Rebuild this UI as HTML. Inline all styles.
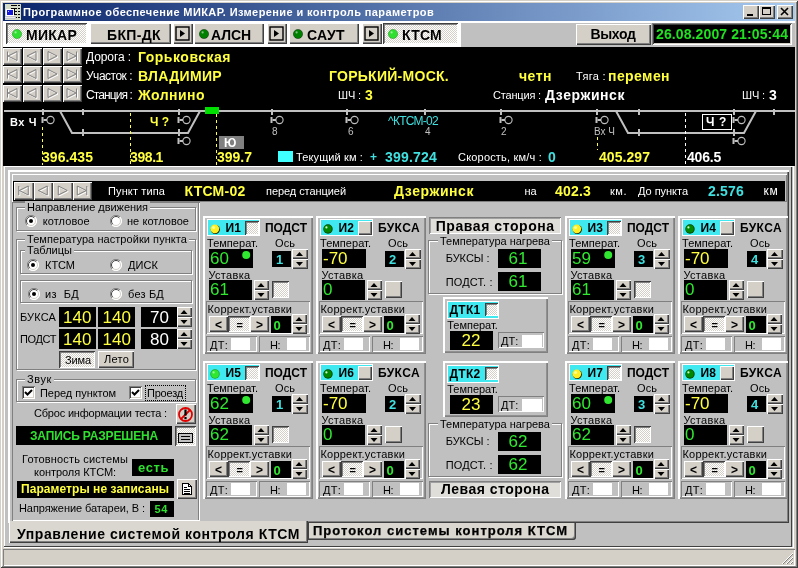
<!DOCTYPE html>
<html lang="ru"><head><meta charset="utf-8"><title>МИКАР</title><style>
html,body{margin:0;padding:0;}
body{width:798px;height:568px;overflow:hidden;background:#d4d0c8;position:relative;font-family:"Liberation Sans",sans-serif;font-size:11px;}
div,span.t,svg{position:absolute;box-sizing:border-box;}
#w{left:0;top:0;width:798px;height:568px;will-change:transform;transform:translateZ(0);}
.t{white-space:pre;}
.b{font-weight:bold;}
.r{background:#d4d0c8;box-shadow:inset 1px 1px #fff,inset -1px -1px #404040,inset -2px -2px #808080;}
.rg{background:#c0c0c0;box-shadow:inset 1px 1px #fff,inset -1px -1px #404040,inset -2px -2px #808080;}
.r1{box-shadow:inset 1px 1px #fff,inset -1px -1px #808080;}
.s{box-shadow:inset 1px 1px #808080,inset -1px -1px #fff,inset 2px 2px #404040,inset -2px -2px #d4d0c8;}
.s1{box-shadow:inset 1px 1px #808080,inset -1px -1px #fff;}
.g{border:1px solid #808080;box-shadow:1px 1px #fff,inset 1px 1px #fff;}
.k{background:#000;}
.h{background-image:repeating-conic-gradient(#fff 0 25%,#d4d0c8 0 50%);background-size:2px 2px;}
</style></head><body><div id="w">
<div class="" style="left:0px;top:0px;width:798px;height:568px;background:#d4d0c8;box-shadow:inset 1px 1px #d4d0c8,inset -1px -1px #404040,inset 2px 2px #fff,inset -2px -2px #808080;"></div>
<div class="" style="left:3px;top:3px;width:792px;height:18px;background:linear-gradient(90deg,#0a246a 0%,#a6caf0 100%);"></div>
<svg style="left:5px;top:4px" width="16" height="16" viewBox="0 0 16 16" shape-rendering="crispEdges"><rect width="16" height="16" fill="#d4dcc8"/><rect x="1" y="5" width="8" height="7" fill="#fff"/><rect x="2" y="6" width="6" height="5" fill="#1818d8"/><rect x="3" y="7" width="1" height="1" fill="#c0c0ff"/><rect x="0" y="12" width="11" height="3" fill="#c4c4cc"/><rect x="0" y="13" width="10" height="1" fill="#e8e8e8"/><path d="M6 1.5h6M13 1.5h2M6 4.5h6M13 4.5h2M10 7.5h2M13 7.5h2M10 10.5h2M13 10.5h2M11 13.5h1M13 13.5h2" stroke="#000"/><path d="M9.5 4v7" stroke="#000"/></svg>
<span class="t b" style="left:23px;top:5.0px;font-size:11px;line-height:15px;color:#fff;letter-spacing:0.40px;">Программное обеспечение МИКАР. Измерение и контроль параметров</span>
<div class="r" style="left:743px;top:5px;width:16px;height:14px;"></div>
<div class="r" style="left:759px;top:5px;width:16px;height:14px;"></div>
<div class="r" style="left:777px;top:5px;width:16px;height:14px;"></div>
<svg style="left:743px;top:5px" width="50" height="14" viewBox="0 0 50 14"><rect x="4" y="9" width="6" height="2" fill="#000"/><rect x="19.5" y="2.5" width="8" height="7" fill="none" stroke="#000"/><rect x="19" y="2" width="9" height="2" fill="#000"/><path d="M38 3l7 7M45 3l-7 7" stroke="#000" stroke-width="1.6"/></svg>
<div class="" style="left:3px;top:21px;width:792px;height:25.5px;background:#fff;"></div>
<div class="" style="left:461px;top:22.5px;width:334px;height:24.5px;background:#c0c0c0;"></div>
<div class="h" style="left:6px;top:23px;width:81px;height:21px;box-shadow:inset 1px 1px #404040,inset -1px -1px #fff,inset 2px 2px #808080;"></div>
<svg style="left:11px;top:28px" width="12" height="12" viewBox="0 0 12 12"><circle cx="6" cy="6" r="4.6" fill="#30e030" stroke="#208020" stroke-opacity=".6" stroke-width=".8"/><circle cx="4.6" cy="4.4" r="1.1" fill="#fff" fill-opacity=".5"/></svg>
<span class="t b" style="left:26px;top:25.5px;font-size:14px;line-height:18px;color:#000;letter-spacing:0.26px;">МИКАР</span>
<div class="r" style="left:90px;top:23px;width:81px;height:21px;"></div>
<span class="t b" style="left:107px;top:25.5px;font-size:14px;line-height:18px;color:#000;letter-spacing:0.36px;">БКП-ДК</span>
<div class="r" style="left:173px;top:23px;width:20px;height:21px;"></div>
<svg style="left:173px;top:23px" width="20" height="21" viewBox="0 0 20 21"><rect x="3" y="4" width="13" height="13" fill="#d4d0c8" stroke="#000" stroke-width="1.4"/><path d="M7 7l5 3.5-5 3.5z" fill="#000"/></svg>
<div class="r" style="left:194px;top:23px;width:70px;height:21px;"></div>
<svg style="left:197.5px;top:28px" width="12" height="12" viewBox="0 0 12 12"><circle cx="6" cy="6" r="4.6" fill="#008000" stroke="#002000" stroke-opacity=".6" stroke-width=".8"/><circle cx="4.6" cy="4.4" r="1.1" fill="#fff" fill-opacity=".5"/></svg>
<span class="t b" style="left:211px;top:25.5px;font-size:14px;line-height:18px;color:#000;letter-spacing:-0.08px;">АЛСН</span>
<div class="r" style="left:267px;top:23px;width:20px;height:21px;"></div>
<svg style="left:267px;top:23px" width="20" height="21" viewBox="0 0 20 21"><rect x="3" y="4" width="13" height="13" fill="#d4d0c8" stroke="#000" stroke-width="1.4"/><path d="M7 7l5 3.5-5 3.5z" fill="#000"/></svg>
<div class="r" style="left:289px;top:23px;width:70px;height:21px;"></div>
<svg style="left:292px;top:28px" width="12" height="12" viewBox="0 0 12 12"><circle cx="6" cy="6" r="4.6" fill="#008000" stroke="#002000" stroke-opacity=".6" stroke-width=".8"/><circle cx="4.6" cy="4.4" r="1.1" fill="#fff" fill-opacity=".5"/></svg>
<span class="t b" style="left:307px;top:25.5px;font-size:14px;line-height:18px;color:#000;letter-spacing:0.35px;">САУТ</span>
<div class="r" style="left:362px;top:23px;width:20px;height:21px;"></div>
<svg style="left:362px;top:23px" width="20" height="21" viewBox="0 0 20 21"><rect x="3" y="4" width="13" height="13" fill="#d4d0c8" stroke="#000" stroke-width="1.4"/><path d="M7 7l5 3.5-5 3.5z" fill="#000"/></svg>
<div class="h" style="left:383px;top:23px;width:75px;height:21px;box-shadow:inset 1px 1px #404040,inset -1px -1px #fff,inset 2px 2px #808080;"></div>
<svg style="left:387px;top:28px" width="12" height="12" viewBox="0 0 12 12"><circle cx="6" cy="6" r="4.6" fill="#30e030" stroke="#208020" stroke-opacity=".6" stroke-width=".8"/><circle cx="4.6" cy="4.4" r="1.1" fill="#fff" fill-opacity=".5"/></svg>
<span class="t b" style="left:402px;top:25.5px;font-size:14px;line-height:18px;color:#000;letter-spacing:0.24px;">КТСМ</span>
<div class="r" style="left:576px;top:23.5px;width:75px;height:21px;"></div>
<span class="t b" style="left:590.5px;top:25.0px;font-size:14px;line-height:18px;color:#000;letter-spacing:-0.35px;">Выход</span>
<div class="k s" style="left:652px;top:23px;width:140px;height:22px;"></div>
<span class="t b" style="left:656px;top:25.0px;font-size:14px;line-height:18px;color:#20e020;letter-spacing:0.11px;">26.08.2007 21:05:44</span>
<div class="k" style="left:3px;top:46.5px;width:792px;height:119.5px;"></div>
<div class="" style="left:3px;top:48px;width:19px;height:17px;background:#d4d0c8;box-shadow:inset 1px 1px #fff,inset -1px -1px #404040,inset -2px -2px #808080;"></div>
<svg style="left:3px;top:48px" width="19" height="17"><path d="M4.5 3.5v9M14.0 3.5l-9 4.5 9 4.5z" transform="translate(1,1)" fill="none" stroke="#fff"/><path d="M4.5 3.5v9M14.0 3.5l-9 4.5 9 4.5z" fill="none" stroke="#808080"/></svg>
<div class="" style="left:23px;top:48px;width:19px;height:17px;background:#d4d0c8;box-shadow:inset 1px 1px #fff,inset -1px -1px #404040,inset -2px -2px #808080;"></div>
<svg style="left:23px;top:48px" width="19" height="17"><path d="M13.0 3.5l-9 4.5 9 4.5z" transform="translate(1,1)" fill="none" stroke="#fff"/><path d="M13.0 3.5l-9 4.5 9 4.5z" fill="none" stroke="#808080"/></svg>
<div class="" style="left:43px;top:48px;width:19px;height:17px;background:#d4d0c8;box-shadow:inset 1px 1px #fff,inset -1px -1px #404040,inset -2px -2px #808080;"></div>
<svg style="left:43px;top:48px" width="19" height="17"><path d="M5.0 3.5l9 4.5-9 4.5z" transform="translate(1,1)" fill="none" stroke="#fff"/><path d="M5.0 3.5l9 4.5-9 4.5z" fill="none" stroke="#808080"/></svg>
<div class="" style="left:63px;top:48px;width:19px;height:17px;background:#d4d0c8;box-shadow:inset 1px 1px #fff,inset -1px -1px #404040,inset -2px -2px #808080;"></div>
<svg style="left:63px;top:48px" width="19" height="17"><path d="M13.5 3.5v9M4.0 3.5l9 4.5-9 4.5z" transform="translate(1,1)" fill="none" stroke="#fff"/><path d="M13.5 3.5v9M4.0 3.5l9 4.5-9 4.5z" fill="none" stroke="#808080"/></svg>
<div class="" style="left:3px;top:66px;width:19px;height:17px;background:#d4d0c8;box-shadow:inset 1px 1px #fff,inset -1px -1px #404040,inset -2px -2px #808080;"></div>
<svg style="left:3px;top:66px" width="19" height="17"><path d="M4.5 3.5v9M14.0 3.5l-9 4.5 9 4.5z" transform="translate(1,1)" fill="none" stroke="#fff"/><path d="M4.5 3.5v9M14.0 3.5l-9 4.5 9 4.5z" fill="none" stroke="#808080"/></svg>
<div class="" style="left:23px;top:66px;width:19px;height:17px;background:#d4d0c8;box-shadow:inset 1px 1px #fff,inset -1px -1px #404040,inset -2px -2px #808080;"></div>
<svg style="left:23px;top:66px" width="19" height="17"><path d="M13.0 3.5l-9 4.5 9 4.5z" transform="translate(1,1)" fill="none" stroke="#fff"/><path d="M13.0 3.5l-9 4.5 9 4.5z" fill="none" stroke="#808080"/></svg>
<div class="" style="left:43px;top:66px;width:19px;height:17px;background:#d4d0c8;box-shadow:inset 1px 1px #fff,inset -1px -1px #404040,inset -2px -2px #808080;"></div>
<svg style="left:43px;top:66px" width="19" height="17"><path d="M5.0 3.5l9 4.5-9 4.5z" transform="translate(1,1)" fill="none" stroke="#fff"/><path d="M5.0 3.5l9 4.5-9 4.5z" fill="none" stroke="#808080"/></svg>
<div class="" style="left:63px;top:66px;width:19px;height:17px;background:#d4d0c8;box-shadow:inset 1px 1px #fff,inset -1px -1px #404040,inset -2px -2px #808080;"></div>
<svg style="left:63px;top:66px" width="19" height="17"><path d="M13.5 3.5v9M4.0 3.5l9 4.5-9 4.5z" transform="translate(1,1)" fill="none" stroke="#fff"/><path d="M13.5 3.5v9M4.0 3.5l9 4.5-9 4.5z" fill="none" stroke="#808080"/></svg>
<div class="" style="left:3px;top:85px;width:19px;height:17px;background:#d4d0c8;box-shadow:inset 1px 1px #fff,inset -1px -1px #404040,inset -2px -2px #808080;"></div>
<svg style="left:3px;top:85px" width="19" height="17"><path d="M4.5 3.5v9M14.0 3.5l-9 4.5 9 4.5z" transform="translate(1,1)" fill="none" stroke="#fff"/><path d="M4.5 3.5v9M14.0 3.5l-9 4.5 9 4.5z" fill="none" stroke="#808080"/></svg>
<div class="" style="left:23px;top:85px;width:19px;height:17px;background:#d4d0c8;box-shadow:inset 1px 1px #fff,inset -1px -1px #404040,inset -2px -2px #808080;"></div>
<svg style="left:23px;top:85px" width="19" height="17"><path d="M13.0 3.5l-9 4.5 9 4.5z" transform="translate(1,1)" fill="none" stroke="#fff"/><path d="M13.0 3.5l-9 4.5 9 4.5z" fill="none" stroke="#808080"/></svg>
<div class="" style="left:43px;top:85px;width:19px;height:17px;background:#d4d0c8;box-shadow:inset 1px 1px #fff,inset -1px -1px #404040,inset -2px -2px #808080;"></div>
<svg style="left:43px;top:85px" width="19" height="17"><path d="M5.0 3.5l9 4.5-9 4.5z" transform="translate(1,1)" fill="none" stroke="#fff"/><path d="M5.0 3.5l9 4.5-9 4.5z" fill="none" stroke="#808080"/></svg>
<div class="" style="left:63px;top:85px;width:19px;height:17px;background:#d4d0c8;box-shadow:inset 1px 1px #fff,inset -1px -1px #404040,inset -2px -2px #808080;"></div>
<svg style="left:63px;top:85px" width="19" height="17"><path d="M13.5 3.5v9M4.0 3.5l9 4.5-9 4.5z" transform="translate(1,1)" fill="none" stroke="#fff"/><path d="M13.5 3.5v9M4.0 3.5l9 4.5-9 4.5z" fill="none" stroke="#808080"/></svg>
<span class="t" style="left:86px;top:49.0px;font-size:12px;line-height:16px;color:#fff;letter-spacing:-0.09px;">Дорога :</span>
<span class="t b" style="left:138px;top:48.0px;font-size:14px;line-height:18px;color:#ffff40;letter-spacing:0.51px;">Горьковская</span>
<span class="t" style="left:86px;top:67.5px;font-size:12px;line-height:16px;color:#fff;letter-spacing:-0.50px;">Участок :</span>
<span class="t b" style="left:138px;top:66.5px;font-size:14px;line-height:18px;color:#ffff40;letter-spacing:0.33px;">ВЛАДИМИР</span>
<span class="t b" style="left:329px;top:66.5px;font-size:14px;line-height:18px;color:#ffff40;letter-spacing:0.27px;">ГОРЬКИЙ-МОСК.</span>
<span class="t b" style="left:519px;top:66.5px;font-size:14px;line-height:18px;color:#ffff40;letter-spacing:0.49px;">четн</span>
<span class="t" style="left:576px;top:68.5px;font-size:11px;line-height:15px;color:#fff;letter-spacing:0.32px;">Тяга :</span>
<span class="t b" style="left:608px;top:66.5px;font-size:14px;line-height:18px;color:#ffff40;letter-spacing:0.43px;">перемен</span>
<span class="t" style="left:86px;top:86.5px;font-size:12px;line-height:16px;color:#fff;letter-spacing:-0.90px;">Станция :</span>
<span class="t b" style="left:138px;top:85.5px;font-size:14px;line-height:18px;color:#ffff40;letter-spacing:0.48px;">Жолнино</span>
<span class="t" style="left:338px;top:87.5px;font-size:11px;line-height:15px;color:#fff;letter-spacing:-0.13px;">ШЧ :</span>
<span class="t b" style="left:365px;top:85.5px;font-size:14px;line-height:18px;color:#ffff40;">3</span>
<span class="t" style="left:493px;top:87.5px;font-size:11px;line-height:15px;color:#fff;letter-spacing:-0.18px;">Станция :</span>
<span class="t b" style="left:545px;top:85.5px;font-size:14px;line-height:18px;color:#fff;letter-spacing:0.55px;">Дзержинск</span>
<span class="t" style="left:742px;top:87.5px;font-size:11px;line-height:15px;color:#fff;letter-spacing:-0.13px;">ШЧ :</span>
<span class="t b" style="left:769px;top:85.5px;font-size:14px;line-height:18px;color:#fff;">3</span>
<svg style="left:0;top:100px" width="798" height="68" viewBox="0 100 798 68" shape-rendering="crispEdges"><rect x="4" y="110" width="791" height="2" fill="#c0c0c0"/><path d="M60 111L72 133H188L200 111" fill="none" stroke="#c0c0c0" stroke-width="2" shape-rendering="auto"/><rect x="41.5" y="108.5" width="2" height="6.5" fill="#c0c0c0"/><rect x="81.5" y="108.5" width="2" height="6.5" fill="#c0c0c0"/><rect x="177.5" y="108.5" width="2" height="6.5" fill="#c0c0c0"/><rect x="270.5" y="108.5" width="2" height="6.5" fill="#c0c0c0"/><rect x="345.5" y="108.5" width="2" height="6.5" fill="#c0c0c0"/><rect x="423.5" y="108.5" width="2" height="6.5" fill="#c0c0c0"/><rect x="499.5" y="108.5" width="2" height="6.5" fill="#c0c0c0"/><rect x="595.5" y="108.5" width="2" height="6.5" fill="#c0c0c0"/><rect x="637.5" y="108.5" width="2" height="6.5" fill="#c0c0c0"/><rect x="732.5" y="108.5" width="2" height="6.5" fill="#c0c0c0"/><rect x="772.5" y="108.5" width="2" height="6.5" fill="#c0c0c0"/><rect x="81.5" y="129" width="2" height="7" fill="#c0c0c0"/><rect x="177.5" y="129" width="2" height="7" fill="#c0c0c0"/><path d="M616 111L628 133H744L756 111" fill="none" stroke="#c0c0c0" stroke-width="2" shape-rendering="auto"/><rect x="637.5" y="129" width="2" height="7" fill="#c0c0c0"/><rect x="732.5" y="129" width="2" height="7" fill="#c0c0c0"/><rect x="205" y="107" width="14" height="7" fill="#00e000"/><path d="M42.5 127V165" stroke="#ffff40" stroke-dasharray="3 3"/><path d="M130.5 113V165" stroke="#ffff40" stroke-dasharray="3 3"/><path d="M216.5 114V165" stroke="#ffff40" stroke-dasharray="3 3"/><path d="M597.5 137V150" stroke="#ffff40" stroke-dasharray="3 3"/><path d="M685.5 113V165" stroke="#fff" stroke-dasharray="3 3"/><g shape-rendering="auto"><rect x="41.5" y="117" width="2" height="6" fill="#c0c0c0"/><rect x="43.5" y="119" width="3.5" height="2" fill="#c0c0c0"/><circle cx="50.5" cy="120" r="3.6" fill="none" stroke="#c0c0c0" stroke-width="1.1"/><rect x="177.5" y="117" width="2" height="6" fill="#c0c0c0"/><rect x="179.5" y="119" width="3.5" height="2" fill="#c0c0c0"/><circle cx="186.5" cy="120" r="3.6" fill="none" stroke="#c0c0c0" stroke-width="1.1"/><rect x="177.5" y="138" width="2" height="6" fill="#c0c0c0"/><rect x="179.5" y="140" width="3.5" height="2" fill="#c0c0c0"/><circle cx="186.5" cy="141" r="3.6" fill="none" stroke="#c0c0c0" stroke-width="1.1"/><rect x="270.5" y="117" width="2" height="6" fill="#c0c0c0"/><rect x="272.5" y="119" width="3.5" height="2" fill="#c0c0c0"/><circle cx="279.5" cy="120" r="3.6" fill="none" stroke="#c0c0c0" stroke-width="1.1"/><rect x="345.5" y="117" width="2" height="6" fill="#c0c0c0"/><rect x="347.5" y="119" width="3.5" height="2" fill="#c0c0c0"/><circle cx="354.5" cy="120" r="3.6" fill="none" stroke="#c0c0c0" stroke-width="1.1"/><rect x="499.5" y="117" width="2" height="6" fill="#c0c0c0"/><rect x="501.5" y="119" width="3.5" height="2" fill="#c0c0c0"/><circle cx="508.5" cy="120" r="3.6" fill="none" stroke="#c0c0c0" stroke-width="1.1"/><rect x="595.5" y="117" width="2" height="6" fill="#c0c0c0"/><rect x="597.5" y="119" width="3.5" height="2" fill="#c0c0c0"/><circle cx="604.5" cy="120" r="3.6" fill="none" stroke="#c0c0c0" stroke-width="1.1"/><rect x="732.5" y="117" width="2" height="6" fill="#c0c0c0"/><rect x="734.5" y="119" width="3.5" height="2" fill="#c0c0c0"/><circle cx="741.5" cy="120" r="3.6" fill="none" stroke="#c0c0c0" stroke-width="1.1"/><rect x="732.5" y="138" width="2" height="6" fill="#c0c0c0"/><rect x="734.5" y="140" width="3.5" height="2" fill="#c0c0c0"/><circle cx="741.5" cy="141" r="3.6" fill="none" stroke="#c0c0c0" stroke-width="1.1"/></g><rect x="219" y="136" width="25" height="13" fill="#808080"/><rect x="702.5" y="114.5" width="29" height="15" fill="#000" stroke="#fff"/><rect x="278" y="151" width="15" height="11" fill="#40ffff"/></svg>
<span class="t b" style="left:10px;top:114.5px;font-size:11px;line-height:15px;color:#fff;letter-spacing:0.57px;">Вх Ч</span>
<span class="t b" style="left:150px;top:114.0px;font-size:12px;line-height:16px;color:#ffff40;letter-spacing:-0.04px;">Ч ?</span>
<span class="t b" style="left:706px;top:114.0px;font-size:12px;line-height:16px;color:#fff;letter-spacing:0.63px;">Ч ?</span>
<span class="t b" style="left:224px;top:134.5px;font-size:12px;line-height:16px;color:#fff;letter-spacing:0.62px;">Ю</span>
<span class="t b" style="left:42px;top:148.0px;font-size:14px;line-height:18px;color:#ffff40;letter-spacing:0.06px;">396.435</span>
<span class="t b" style="left:130px;top:148.0px;font-size:14px;line-height:18px;color:#ffff40;letter-spacing:-0.41px;">398.1</span>
<span class="t b" style="left:217px;top:148.0px;font-size:14px;line-height:18px;color:#ffff40;letter-spacing:-0.01px;">399.7</span>
<span class="t b" style="left:599px;top:148.0px;font-size:14px;line-height:18px;color:#ffff40;letter-spacing:0.06px;">405.297</span>
<span class="t b" style="left:687px;top:148.0px;font-size:14px;line-height:18px;color:#fff;letter-spacing:-0.21px;">406.5</span>
<span class="t" style="left:272px;top:125.0px;font-size:10px;line-height:14px;color:#c0c0c0;">8</span>
<span class="t" style="left:348px;top:125.0px;font-size:10px;line-height:14px;color:#c0c0c0;">6</span>
<span class="t" style="left:425px;top:125.0px;font-size:10px;line-height:14px;color:#c0c0c0;">4</span>
<span class="t" style="left:501px;top:125.0px;font-size:10px;line-height:14px;color:#c0c0c0;">2</span>
<span class="t" style="left:594px;top:125.0px;font-size:10px;line-height:14px;color:#c0c0c0;letter-spacing:-0.00px;">Вх Ч</span>
<span class="t" style="left:388px;top:113.0px;font-size:12px;line-height:16px;color:#40e0e0;letter-spacing:-0.73px;">^КТСМ-02</span>
<span class="t" style="left:296px;top:149.5px;font-size:11px;line-height:15px;color:#fff;letter-spacing:0.12px;">Текущий км :</span>
<span class="t b" style="left:370px;top:148.5px;font-size:12px;line-height:16px;color:#40e0e0;">+</span>
<span class="t b" style="left:385px;top:148.0px;font-size:14px;line-height:18px;color:#40e0e0;letter-spacing:0.20px;">399.724</span>
<span class="t" style="left:458px;top:149.5px;font-size:11px;line-height:15px;color:#fff;letter-spacing:0.19px;">Скорость, км/ч :</span>
<span class="t b" style="left:548px;top:148.0px;font-size:14px;line-height:18px;color:#40e0e0;">0</span>
<div class="" style="left:3px;top:166px;width:792px;height:400px;background:#d4d0c8;"></div>
<div class="" style="left:4px;top:166px;width:790px;height:382px;background:#c0c0c0;"></div>
<div class="" style="left:4px;top:166px;width:790px;height:1px;background:#fff;"></div>
<div class="" style="left:4px;top:166px;width:1px;height:381px;background:#fff;"></div>
<div class="" style="left:791px;top:167px;width:1px;height:380px;background:#404040;"></div>
<div class="" style="left:793px;top:166px;width:1px;height:382px;background:#fff;"></div>
<div class="" style="left:4px;top:546px;width:788px;height:1px;background:#404040;"></div>
<div class="" style="left:4px;top:547px;width:790px;height:1px;background:#fff;"></div>
<div class="" style="left:8px;top:170px;width:781px;height:353px;background:#c0c0c0;box-shadow:inset 1px 1px #fff,inset 2px 2px #fff,inset -1px -1px #404040,inset -2px -2px #808080;"></div>
<div class="" style="left:12px;top:174px;width:775px;height:28px;box-shadow:inset 1px 1px #fff,inset -1px -1px #808080;"></div>
<div class="k" style="left:13px;top:181px;width:772px;height:20px;"></div>
<div class="" style="left:14.0px;top:182px;width:19.5px;height:18px;background:#d4d0c8;box-shadow:inset 1px 1px #fff,inset -1px -1px #404040,inset -2px -2px #808080;"></div>
<svg style="left:14.0px;top:182px" width="19.5" height="18"><path d="M4.75 4.0v9M14.25 4.0l-9 4.5 9 4.5z" transform="translate(1,1)" fill="none" stroke="#fff"/><path d="M4.75 4.0v9M14.25 4.0l-9 4.5 9 4.5z" fill="none" stroke="#808080"/></svg>
<div class="" style="left:33.5px;top:182px;width:19.5px;height:18px;background:#d4d0c8;box-shadow:inset 1px 1px #fff,inset -1px -1px #404040,inset -2px -2px #808080;"></div>
<svg style="left:33.5px;top:182px" width="19.5" height="18"><path d="M13.25 4.0l-9 4.5 9 4.5z" transform="translate(1,1)" fill="none" stroke="#fff"/><path d="M13.25 4.0l-9 4.5 9 4.5z" fill="none" stroke="#808080"/></svg>
<div class="" style="left:53.0px;top:182px;width:19.5px;height:18px;background:#d4d0c8;box-shadow:inset 1px 1px #fff,inset -1px -1px #404040,inset -2px -2px #808080;"></div>
<svg style="left:53.0px;top:182px" width="19.5" height="18"><path d="M5.25 4.0l9 4.5-9 4.5z" transform="translate(1,1)" fill="none" stroke="#fff"/><path d="M5.25 4.0l9 4.5-9 4.5z" fill="none" stroke="#808080"/></svg>
<div class="" style="left:72.5px;top:182px;width:19.5px;height:18px;background:#d4d0c8;box-shadow:inset 1px 1px #fff,inset -1px -1px #404040,inset -2px -2px #808080;"></div>
<svg style="left:72.5px;top:182px" width="19.5" height="18"><path d="M13.75 4.0v9M4.25 4.0l9 4.5-9 4.5z" transform="translate(1,1)" fill="none" stroke="#fff"/><path d="M13.75 4.0v9M4.25 4.0l9 4.5-9 4.5z" fill="none" stroke="#808080"/></svg>
<span class="t" style="left:108px;top:183.5px;font-size:11px;line-height:15px;color:#fff;letter-spacing:0.12px;">Пункт типа</span>
<span class="t b" style="left:184.5px;top:182.0px;font-size:14px;line-height:18px;color:#ffff40;letter-spacing:0.25px;">КТСМ-02</span>
<span class="t" style="left:266px;top:183.5px;font-size:11px;line-height:15px;color:#fff;letter-spacing:-0.06px;">перед станцией</span>
<span class="t b" style="left:394px;top:182.0px;font-size:14px;line-height:18px;color:#ffff40;letter-spacing:0.55px;">Дзержинск</span>
<span class="t" style="left:524.5px;top:183.5px;font-size:11px;line-height:15px;color:#fff;letter-spacing:-0.10px;">на</span>
<span class="t b" style="left:555px;top:182.0px;font-size:14px;line-height:18px;color:#ffff40;letter-spacing:0.19px;">402.3</span>
<span class="t" style="left:610px;top:183.5px;font-size:11px;line-height:15px;color:#fff;letter-spacing:0.52px;">км.</span>
<span class="t" style="left:638px;top:183.5px;font-size:11px;line-height:15px;color:#fff;letter-spacing:-0.03px;">До пункта</span>
<span class="t b" style="left:708px;top:182.0px;font-size:14px;line-height:18px;color:#40e0e0;letter-spacing:0.19px;">2.576</span>
<span class="t" style="left:763.5px;top:183.0px;font-size:12px;line-height:16px;color:#fff;letter-spacing:0.75px;">км</span>
<div class="" style="left:12px;top:202px;width:188px;height:319px;background:#c0c0c0;box-shadow:inset 1px 1px #808080,inset -1px -1px #fff,inset -2px 0 #808080;"></div>
<div class="g" style="left:16px;top:207px;width:180px;height:24px;"></div>
<div class="" style="left:25px;top:201px;width:125px;height:13px;background:#c0c0c0;"></div>
<span class="t" style="left:27px;top:200.0px;font-size:11px;line-height:15px;color:#000;letter-spacing:-0.04px;">Направление движения</span>
<svg style="left:25px;top:215px" width="12" height="12" viewBox="0 0 12 12"><circle cx="6" cy="6" r="5.5" fill="#fff"/><path d="M10 2A5.5 5.5 0 0 0 2 10" fill="none" stroke="#808080"/><path d="M2 10A5.5 5.5 0 0 0 10 2" fill="none" stroke="#fff"/><path d="M9.2 2.8A4.5 4.5 0 0 0 2.8 9.2" fill="none" stroke="#404040"/><path d="M2.8 9.2A4.5 4.5 0 0 0 9.2 2.8" fill="none" stroke="#d4d0c8"/><circle cx="6" cy="6" r="2" fill="#000"/></svg>
<span class="t" style="left:42.7px;top:213.5px;font-size:11px;line-height:15px;color:#000;letter-spacing:0.10px;">котловое</span>
<svg style="left:110px;top:215px" width="12" height="12" viewBox="0 0 12 12"><circle cx="6" cy="6" r="5.5" fill="#fff"/><path d="M10 2A5.5 5.5 0 0 0 2 10" fill="none" stroke="#808080"/><path d="M2 10A5.5 5.5 0 0 0 10 2" fill="none" stroke="#fff"/><path d="M9.2 2.8A4.5 4.5 0 0 0 2.8 9.2" fill="none" stroke="#404040"/><path d="M2.8 9.2A4.5 4.5 0 0 0 9.2 2.8" fill="none" stroke="#d4d0c8"/></svg>
<span class="t" style="left:127px;top:213.5px;font-size:11px;line-height:15px;color:#000;letter-spacing:0.05px;">не котловое</span>
<div class="g" style="left:16px;top:239px;width:180px;height:131px;"></div>
<div class="" style="left:25px;top:233px;width:164px;height:13px;background:#c0c0c0;"></div>
<span class="t" style="left:27px;top:232.0px;font-size:11px;line-height:15px;color:#000;letter-spacing:0.06px;">Температура настройки пункта</span>
<div class="g" style="left:20px;top:250px;width:172px;height:24px;"></div>
<div class="" style="left:25px;top:244px;width:49px;height:13px;background:#c0c0c0;"></div>
<span class="t" style="left:27px;top:243.0px;font-size:11px;line-height:15px;color:#000;letter-spacing:0.01px;">Таблицы</span>
<svg style="left:27px;top:259px" width="12" height="12" viewBox="0 0 12 12"><circle cx="6" cy="6" r="5.5" fill="#fff"/><path d="M10 2A5.5 5.5 0 0 0 2 10" fill="none" stroke="#808080"/><path d="M2 10A5.5 5.5 0 0 0 10 2" fill="none" stroke="#fff"/><path d="M9.2 2.8A4.5 4.5 0 0 0 2.8 9.2" fill="none" stroke="#404040"/><path d="M2.8 9.2A4.5 4.5 0 0 0 9.2 2.8" fill="none" stroke="#d4d0c8"/><circle cx="6" cy="6" r="2" fill="#000"/></svg>
<span class="t" style="left:45px;top:257.5px;font-size:11px;line-height:15px;color:#000;letter-spacing:-0.03px;">КТСМ</span>
<svg style="left:110px;top:259px" width="12" height="12" viewBox="0 0 12 12"><circle cx="6" cy="6" r="5.5" fill="#fff"/><path d="M10 2A5.5 5.5 0 0 0 2 10" fill="none" stroke="#808080"/><path d="M2 10A5.5 5.5 0 0 0 10 2" fill="none" stroke="#fff"/><path d="M9.2 2.8A4.5 4.5 0 0 0 2.8 9.2" fill="none" stroke="#404040"/><path d="M2.8 9.2A4.5 4.5 0 0 0 9.2 2.8" fill="none" stroke="#d4d0c8"/></svg>
<span class="t" style="left:128px;top:257.5px;font-size:11px;line-height:15px;color:#000;letter-spacing:0.07px;">ДИСК</span>
<div class="g" style="left:20px;top:280px;width:172px;height:23px;"></div>
<svg style="left:28px;top:288px" width="12" height="12" viewBox="0 0 12 12"><circle cx="6" cy="6" r="5.5" fill="#fff"/><path d="M10 2A5.5 5.5 0 0 0 2 10" fill="none" stroke="#808080"/><path d="M2 10A5.5 5.5 0 0 0 10 2" fill="none" stroke="#fff"/><path d="M9.2 2.8A4.5 4.5 0 0 0 2.8 9.2" fill="none" stroke="#404040"/><path d="M2.8 9.2A4.5 4.5 0 0 0 9.2 2.8" fill="none" stroke="#d4d0c8"/><circle cx="6" cy="6" r="2" fill="#000"/></svg>
<span class="t" style="left:45px;top:286.5px;font-size:11px;line-height:15px;color:#000;letter-spacing:0.34px;">из  БД</span>
<svg style="left:110px;top:288px" width="12" height="12" viewBox="0 0 12 12"><circle cx="6" cy="6" r="5.5" fill="#fff"/><path d="M10 2A5.5 5.5 0 0 0 2 10" fill="none" stroke="#808080"/><path d="M2 10A5.5 5.5 0 0 0 10 2" fill="none" stroke="#fff"/><path d="M9.2 2.8A4.5 4.5 0 0 0 2.8 9.2" fill="none" stroke="#404040"/><path d="M2.8 9.2A4.5 4.5 0 0 0 9.2 2.8" fill="none" stroke="#d4d0c8"/></svg>
<span class="t" style="left:128px;top:286.5px;font-size:11px;line-height:15px;color:#000;letter-spacing:0.20px;">без БД</span>
<span class="t" style="left:20px;top:309.5px;font-size:11px;line-height:15px;color:#000;letter-spacing:0.14px;">БУКСА</span>
<span class="t" style="left:20px;top:332.0px;font-size:11px;line-height:15px;color:#000;letter-spacing:-0.39px;">ПОДСТ</span>
<div class="k" style="left:59px;top:307px;width:36.5px;height:20px;"></div>
<span class="t" style="left:63px;top:306.5px;font-size:17px;line-height:21px;color:#ffff40;">140</span>
<div class="k" style="left:98px;top:307px;width:37px;height:20px;"></div>
<span class="t" style="left:102.5px;top:306.5px;font-size:17px;line-height:21px;color:#ffff40;">140</span>
<div class="k" style="left:141px;top:307px;width:36px;height:20px;"></div>
<span class="t" style="left:150px;top:306.5px;font-size:17px;line-height:21px;color:#fff;">70</span>
<div class="r" style="left:177px;top:307px;width:15px;height:10px;"></div>
<svg style="left:177px;top:307px" width="15" height="10"><path d="M3.5 7.0l3.5-4 3.5 4z" fill="#000"/></svg>
<div class="r" style="left:177px;top:317px;width:15px;height:10px;"></div>
<svg style="left:177px;top:317px" width="15" height="10"><path d="M3.5 3.0l3.5 4 3.5-4z" fill="#000"/></svg>
<div class="k" style="left:59px;top:329px;width:36.5px;height:20px;"></div>
<span class="t" style="left:63px;top:328.5px;font-size:17px;line-height:21px;color:#ffff40;">140</span>
<div class="k" style="left:98px;top:329px;width:37px;height:20px;"></div>
<span class="t" style="left:102.5px;top:328.5px;font-size:17px;line-height:21px;color:#ffff40;">140</span>
<div class="k" style="left:141px;top:329px;width:36px;height:20px;"></div>
<span class="t" style="left:150px;top:328.5px;font-size:17px;line-height:21px;color:#fff;">80</span>
<div class="r" style="left:177px;top:329px;width:15px;height:10px;"></div>
<svg style="left:177px;top:329px" width="15" height="10"><path d="M3.5 7.0l3.5-4 3.5 4z" fill="#000"/></svg>
<div class="r" style="left:177px;top:339px;width:15px;height:10px;"></div>
<svg style="left:177px;top:339px" width="15" height="10"><path d="M3.5 3.0l3.5 4 3.5-4z" fill="#000"/></svg>
<div class="h" style="left:59px;top:351px;width:36px;height:17px;box-shadow:inset 1px 1px #404040,inset -1px -1px #fff,inset 2px 2px #808080;"></div>
<span class="t" style="left:65px;top:352.5px;font-size:11px;line-height:15px;color:#000;letter-spacing:-0.12px;">Зима</span>
<div class="r" style="left:98px;top:351px;width:36px;height:17px;"></div>
<span class="t" style="left:104px;top:352.0px;font-size:11px;line-height:15px;color:#000;letter-spacing:0.25px;">Лето</span>
<div class="g" style="left:16px;top:379px;width:180px;height:23px;"></div>
<div class="" style="left:25px;top:373px;width:29px;height:13px;background:#c0c0c0;"></div>
<span class="t" style="left:27px;top:372.0px;font-size:11px;line-height:15px;color:#000;letter-spacing:0.61px;">Звук</span>
<div class="" style="left:22px;top:386px;width:13px;height:13px;background:#fff;box-shadow:inset 1px 1px #808080,inset -1px -1px #fff,inset 2px 2px #404040,inset -2px -2px #d4d0c8;"></div>
<svg style="left:22px;top:386px" width="13" height="13" viewBox="0 0 13 13"><path d="M3 6l2.5 2.5L10 4" fill="none" stroke="#000" stroke-width="2"/></svg>
<span class="t" style="left:40px;top:385.5px;font-size:11px;line-height:15px;color:#000;letter-spacing:-0.04px;">Перед пунктом</span>
<div class="" style="left:129px;top:386px;width:13px;height:13px;background:#fff;box-shadow:inset 1px 1px #808080,inset -1px -1px #fff,inset 2px 2px #404040,inset -2px -2px #d4d0c8;"></div>
<svg style="left:129px;top:386px" width="13" height="13" viewBox="0 0 13 13"><path d="M3 6l2.5 2.5L10 4" fill="none" stroke="#000" stroke-width="2"/></svg>
<span class="t" style="left:147px;top:385.5px;font-size:11px;line-height:15px;color:#000;letter-spacing:-0.21px;">Проезд</span>
<div class="" style="left:145px;top:385px;width:41px;height:16px;border:1px dotted #000;"></div>
<span class="t" style="left:34px;top:406.0px;font-size:11px;line-height:15px;color:#000;letter-spacing:-0.19px;">Сброс информации теста :</span>
<div class="r" style="left:175.5px;top:404px;width:20.5px;height:20px;"></div>
<svg style="left:177px;top:405.5px" width="17" height="17" viewBox="0 0 17 17"><circle cx="8.5" cy="8.5" r="6.5" fill="none" stroke="#e00000" stroke-width="1.8"/><path d="M4 13L13 4" stroke="#e00000" stroke-width="1.8"/><path d="M8.5 3.5v6" stroke="#000" stroke-width="2.2"/><rect x="7.4" y="11" width="2.2" height="2.2" fill="#000"/></svg>
<div class="k" style="left:16px;top:426px;width:156px;height:18.5px;"></div>
<span class="t b" style="left:30px;top:427.5px;font-size:12px;line-height:16px;color:#30e030;letter-spacing:-0.15px;">ЗАПИСЬ РАЗРЕШЕНА</span>
<div class="h" style="left:175px;top:426px;width:20.5px;height:20px;box-shadow:inset 1px 1px #404040,inset -1px -1px #fff,inset 2px 2px #808080;"></div>
<svg style="left:175px;top:426px" width="21" height="20" viewBox="0 0 21 20" shape-rendering="crispEdges"><rect x="3.5" y="7.5" width="14" height="9" fill="#c0c0c0" stroke="#000"/><path d="M6 10.5h9M6 13.5h9" stroke="#000"/></svg>
<span class="t" style="left:22px;top:452.0px;font-size:11px;line-height:15px;color:#000;letter-spacing:0.16px;">Готовность системы</span>
<span class="t" style="left:34px;top:465.0px;font-size:11px;line-height:15px;color:#000;letter-spacing:-0.05px;">контроля КТСМ:</span>
<div class="k" style="left:132px;top:459px;width:41.5px;height:17px;"></div>
<span class="t b" style="left:138px;top:459.0px;font-size:13px;line-height:17px;color:#30e030;letter-spacing:0.59px;">есть</span>
<div class="k" style="left:17px;top:480.5px;width:157px;height:17.5px;"></div>
<span class="t b" style="left:21px;top:481.0px;font-size:12px;line-height:16px;color:#ffff40;letter-spacing:0.06px;">Параметры не записаны</span>
<div class="r" style="left:177px;top:479px;width:20px;height:20px;"></div>
<svg style="left:177px;top:479px" width="20" height="20" viewBox="0 0 20 20" shape-rendering="crispEdges"><path d="M5.5 4.5h6l3 3v8h-9z" fill="#fff" stroke="#000"/><path d="M11.5 4.5v3h3" fill="none" stroke="#000"/><path d="M7 8h3M7 10h6M7 12h6M7 14h6" stroke="#000"/></svg>
<span class="t" style="left:19px;top:501.0px;font-size:11px;line-height:15px;color:#000;letter-spacing:-0.08px;">Напряжение батареи, В :</span>
<div class="k" style="left:150px;top:501px;width:24px;height:16px;"></div>
<span class="t b" style="left:154.5px;top:501.5px;font-size:11px;line-height:15px;color:#30e030;letter-spacing:0.62px;">54</span>
<div class="" style="left:9px;top:521px;width:299px;height:22px;background:#dad7d0;box-shadow:inset 1px 0 #fff,inset -1px -1px #404040,inset -2px -2px #808080;"></div>
<span class="t b" style="left:17px;top:524.5px;font-size:14px;line-height:18px;color:#000;letter-spacing:0.58px;">Управление системой контроля КТСМ</span>
<div class="" style="left:308px;top:522px;width:268px;height:18px;background:#dad7d0;border-radius:0 0 3px 0;box-shadow:inset 1px 1px #404040,inset -1px -1px #404040,inset -2px -2px #808080;"></div>
<span class="t b" style="left:313px;top:522.0px;font-size:13px;line-height:17px;color:#000;letter-spacing:1.01px;-webkit-text-stroke:.25px #000;">Протокол системы контроля КТСМ</span>
<div class="s1" style="left:3px;top:549px;width:792px;height:17px;background:#d4d0c8;"></div>
<svg style="left:781px;top:552px" width="13" height="13" viewBox="0 0 13 13"><path d="M12 2L2 12M12 6L6 12M12 10l-2 2" stroke="#808080"/><path d="M12 1L1 12M12 5L5 12M12 9l-3 3" stroke="#fff"/></svg>
<div class="" style="left:203px;top:216px;width:110px;height:138px;background:#c0c0c0;box-shadow:inset 1px 1px #fff,inset 2px 2px #fff,inset -1px -1px #808080,inset -2px -2px #909090;"></div>
<div class="" style="left:207px;top:219px;width:53px;height:17px;background:#40e8f0;box-shadow:inset 1px 1px #fff,inset -1px -1px #fff;"></div>
<svg style="left:209px;top:222.5px" width="12" height="12" viewBox="0 0 12 12"><circle cx="6.3" cy="6.5" r="4.6" fill="#202000"/><circle cx="5.8" cy="5.8" r="4.4" fill="#ffee20"/><circle cx="4.6" cy="4.4" r="1.5" fill="#ffff90"/></svg>
<span class="t b" style="left:225.5px;top:220.0px;font-size:12px;line-height:16px;color:#000;letter-spacing:0.09px;">И1</span>
<div class="h" style="left:245px;top:221px;width:14px;height:14px;box-shadow:inset 1px 1px #404040,inset -1px -1px #fff,inset 2px 2px #808080;"></div>
<span class="t b" style="left:265px;top:220.0px;font-size:12px;line-height:16px;color:#000;letter-spacing:-0.01px;">ПОДСТ</span>
<span class="t" style="left:207px;top:235.5px;font-size:11px;line-height:15px;color:#000;letter-spacing:0.03px;">Температ.</span>
<span class="t" style="left:275px;top:235.5px;font-size:11px;line-height:15px;color:#000;letter-spacing:0.07px;">Ось</span>
<div class="k" style="left:209px;top:248.5px;width:44px;height:19.5px;"></div>
<span class="t" style="left:210px;top:247.5px;font-size:17px;line-height:21px;color:#30e830;">60</span>
<svg style="left:241px;top:250px" width="10" height="10" viewBox="0 0 10 10"><circle cx="5.2" cy="5" r="4" fill="#30e830"/></svg>
<div class="k" style="left:272px;top:251px;width:18.5px;height:16px;"></div>
<span class="t b" style="left:276px;top:250.5px;font-size:13px;line-height:17px;color:#40e0e0;">1</span>
<div class="r" style="left:292px;top:249px;width:16px;height:10px;"></div>
<svg style="left:292px;top:249px" width="16" height="10"><path d="M4.0 7.0l3.5-4 3.5 4z" fill="#000"/></svg>
<div class="r" style="left:292px;top:259px;width:16px;height:10px;"></div>
<svg style="left:292px;top:259px" width="16" height="10"><path d="M4.0 3.0l3.5 4 3.5-4z" fill="#000"/></svg>
<span class="t" style="left:208.5px;top:267.5px;font-size:11px;line-height:15px;color:#000;letter-spacing:0.31px;">Уставка</span>
<div class="k" style="left:209px;top:280px;width:43px;height:19.5px;"></div>
<span class="t" style="left:210px;top:279.2px;font-size:17px;line-height:21px;color:#30e830;">61</span>
<div class="r" style="left:254px;top:280px;width:15px;height:10px;"></div>
<svg style="left:254px;top:280px" width="15" height="10"><path d="M3.5 7.0l3.5-4 3.5 4z" fill="#000"/></svg>
<div class="r" style="left:254px;top:290px;width:15px;height:10px;"></div>
<svg style="left:254px;top:290px" width="15" height="10"><path d="M3.5 3.0l3.5 4 3.5-4z" fill="#000"/></svg>
<div class="h" style="left:272px;top:280.5px;width:17px;height:17.5px;box-shadow:inset 1px 1px #404040,inset -1px -1px #fff,inset 2px 2px #808080;"></div>
<div class="" style="left:206px;top:301px;width:104px;height:33px;box-shadow:inset 1px 1px #808080,inset -1px -1px #fff;"></div>
<span class="t" style="left:207.5px;top:301.5px;font-size:11px;line-height:15px;color:#000;letter-spacing:0.21px;">Коррект.уставки</span>
<div class="r" style="left:209px;top:316px;width:19px;height:16px;"></div>
<span class="t b" style="left:215px;top:316.5px;font-size:12px;line-height:16px;color:#000;">&lt;</span>
<div class="h" style="left:228px;top:316px;width:22px;height:16px;box-shadow:inset 1px 1px #404040,inset -1px -1px #fff,inset 2px 2px #808080;"></div>
<span class="t b" style="left:236.5px;top:318.0px;font-size:11px;line-height:15px;color:#000;">=</span>
<div class="r" style="left:250px;top:316px;width:18.5px;height:16px;"></div>
<span class="t b" style="left:256px;top:316.5px;font-size:12px;line-height:16px;color:#000;">&gt;</span>
<div class="k" style="left:271px;top:316px;width:20px;height:17px;"></div>
<span class="t b" style="left:273.5px;top:316.5px;font-size:13px;line-height:17px;color:#30e830;">0</span>
<div class="r" style="left:292px;top:314px;width:15px;height:10px;"></div>
<svg style="left:292px;top:314px" width="15" height="10"><path d="M3.5 7.0l3.5-4 3.5 4z" fill="#000"/></svg>
<div class="r" style="left:292px;top:324px;width:15px;height:10px;"></div>
<svg style="left:292px;top:324px" width="15" height="10"><path d="M3.5 3.0l3.5 4 3.5-4z" fill="#000"/></svg>
<div class="" style="left:206px;top:335.5px;width:51px;height:16.5px;box-shadow:inset 1px 1px #808080,inset -1px -1px #fff;"></div>
<div class="" style="left:259px;top:335.5px;width:51px;height:16.5px;box-shadow:inset 1px 1px #808080,inset -1px -1px #fff;"></div>
<span class="t" style="left:210px;top:337.5px;font-size:11px;line-height:15px;color:#000;letter-spacing:0.26px;">ДТ:</span>
<div class="" style="left:230.5px;top:338px;width:19px;height:12px;background:#fff;"></div>
<span class="t" style="left:270px;top:337.5px;font-size:11px;line-height:15px;color:#000;letter-spacing:-0.50px;">Н:</span>
<div class="" style="left:287px;top:338px;width:19px;height:12px;background:#fff;"></div>
<div class="" style="left:316px;top:216px;width:110px;height:138px;background:#c0c0c0;box-shadow:inset 1px 1px #fff,inset 2px 2px #fff,inset -1px -1px #808080,inset -2px -2px #909090;"></div>
<div class="" style="left:320px;top:219px;width:53px;height:17px;background:#40e8f0;box-shadow:inset 1px 1px #fff,inset -1px -1px #fff;"></div>
<svg style="left:322px;top:222.5px" width="12" height="12" viewBox="0 0 12 12"><circle cx="6" cy="6" r="4.7" fill="#004000"/><circle cx="5.8" cy="5.8" r="3.9" fill="#008800"/><circle cx="4.4" cy="4.4" r="1.1" fill="#d0ffd0"/></svg>
<span class="t b" style="left:338.5px;top:220.0px;font-size:12px;line-height:16px;color:#000;letter-spacing:0.09px;">И2</span>
<div class="r" style="left:358px;top:221px;width:14px;height:14px;"></div>
<span class="t b" style="left:378px;top:220.0px;font-size:12px;line-height:16px;color:#000;letter-spacing:0.40px;">БУКСА</span>
<span class="t" style="left:320px;top:235.5px;font-size:11px;line-height:15px;color:#000;letter-spacing:0.03px;">Температ.</span>
<span class="t" style="left:388px;top:235.5px;font-size:11px;line-height:15px;color:#000;letter-spacing:0.07px;">Ось</span>
<div class="k" style="left:322px;top:248.5px;width:44px;height:19.5px;"></div>
<span class="t" style="left:323px;top:247.5px;font-size:17px;line-height:21px;color:#ffff40;">-70</span>
<div class="k" style="left:385px;top:251px;width:18.5px;height:16px;"></div>
<span class="t b" style="left:389px;top:250.5px;font-size:13px;line-height:17px;color:#40e0e0;">2</span>
<div class="r" style="left:405px;top:249px;width:16px;height:10px;"></div>
<svg style="left:405px;top:249px" width="16" height="10"><path d="M4.0 7.0l3.5-4 3.5 4z" fill="#000"/></svg>
<div class="r" style="left:405px;top:259px;width:16px;height:10px;"></div>
<svg style="left:405px;top:259px" width="16" height="10"><path d="M4.0 3.0l3.5 4 3.5-4z" fill="#000"/></svg>
<span class="t" style="left:321.5px;top:267.5px;font-size:11px;line-height:15px;color:#000;letter-spacing:0.31px;">Уставка</span>
<div class="k" style="left:322px;top:280px;width:43px;height:19.5px;"></div>
<span class="t" style="left:323px;top:279.2px;font-size:17px;line-height:21px;color:#30e830;">0</span>
<div class="r" style="left:367px;top:280px;width:15px;height:10px;"></div>
<svg style="left:367px;top:280px" width="15" height="10"><path d="M3.5 7.0l3.5-4 3.5 4z" fill="#000"/></svg>
<div class="r" style="left:367px;top:290px;width:15px;height:10px;"></div>
<svg style="left:367px;top:290px" width="15" height="10"><path d="M3.5 3.0l3.5 4 3.5-4z" fill="#000"/></svg>
<div class="r" style="left:385px;top:280.5px;width:17px;height:17.5px;"></div>
<div class="" style="left:319px;top:301px;width:104px;height:33px;box-shadow:inset 1px 1px #808080,inset -1px -1px #fff;"></div>
<span class="t" style="left:320.5px;top:301.5px;font-size:11px;line-height:15px;color:#000;letter-spacing:0.21px;">Коррект.уставки</span>
<div class="r" style="left:322px;top:316px;width:19px;height:16px;"></div>
<span class="t b" style="left:328px;top:316.5px;font-size:12px;line-height:16px;color:#000;">&lt;</span>
<div class="h" style="left:341px;top:316px;width:22px;height:16px;box-shadow:inset 1px 1px #404040,inset -1px -1px #fff,inset 2px 2px #808080;"></div>
<span class="t b" style="left:349.5px;top:318.0px;font-size:11px;line-height:15px;color:#000;">=</span>
<div class="r" style="left:363px;top:316px;width:18.5px;height:16px;"></div>
<span class="t b" style="left:369px;top:316.5px;font-size:12px;line-height:16px;color:#000;">&gt;</span>
<div class="k" style="left:384px;top:316px;width:20px;height:17px;"></div>
<span class="t b" style="left:386.5px;top:316.5px;font-size:13px;line-height:17px;color:#30e830;">0</span>
<div class="r" style="left:405px;top:314px;width:15px;height:10px;"></div>
<svg style="left:405px;top:314px" width="15" height="10"><path d="M3.5 7.0l3.5-4 3.5 4z" fill="#000"/></svg>
<div class="r" style="left:405px;top:324px;width:15px;height:10px;"></div>
<svg style="left:405px;top:324px" width="15" height="10"><path d="M3.5 3.0l3.5 4 3.5-4z" fill="#000"/></svg>
<div class="" style="left:319px;top:335.5px;width:51px;height:16.5px;box-shadow:inset 1px 1px #808080,inset -1px -1px #fff;"></div>
<div class="" style="left:372px;top:335.5px;width:51px;height:16.5px;box-shadow:inset 1px 1px #808080,inset -1px -1px #fff;"></div>
<span class="t" style="left:323px;top:337.5px;font-size:11px;line-height:15px;color:#000;letter-spacing:0.26px;">ДТ:</span>
<div class="" style="left:343.5px;top:338px;width:19px;height:12px;background:#fff;"></div>
<span class="t" style="left:383px;top:337.5px;font-size:11px;line-height:15px;color:#000;letter-spacing:-0.50px;">Н:</span>
<div class="" style="left:400px;top:338px;width:19px;height:12px;background:#fff;"></div>
<div class="" style="left:565px;top:216px;width:110px;height:138px;background:#c0c0c0;box-shadow:inset 1px 1px #fff,inset 2px 2px #fff,inset -1px -1px #808080,inset -2px -2px #909090;"></div>
<div class="" style="left:569px;top:219px;width:53px;height:17px;background:#40e8f0;box-shadow:inset 1px 1px #fff,inset -1px -1px #fff;"></div>
<svg style="left:571px;top:222.5px" width="12" height="12" viewBox="0 0 12 12"><circle cx="6.3" cy="6.5" r="4.6" fill="#202000"/><circle cx="5.8" cy="5.8" r="4.4" fill="#ffee20"/><circle cx="4.6" cy="4.4" r="1.5" fill="#ffff90"/></svg>
<span class="t b" style="left:587.5px;top:220.0px;font-size:12px;line-height:16px;color:#000;letter-spacing:0.09px;">И3</span>
<div class="h" style="left:607px;top:221px;width:14px;height:14px;box-shadow:inset 1px 1px #404040,inset -1px -1px #fff,inset 2px 2px #808080;"></div>
<span class="t b" style="left:627px;top:220.0px;font-size:12px;line-height:16px;color:#000;letter-spacing:-0.01px;">ПОДСТ</span>
<span class="t" style="left:569px;top:235.5px;font-size:11px;line-height:15px;color:#000;letter-spacing:0.03px;">Температ.</span>
<span class="t" style="left:637px;top:235.5px;font-size:11px;line-height:15px;color:#000;letter-spacing:0.07px;">Ось</span>
<div class="k" style="left:571px;top:248.5px;width:44px;height:19.5px;"></div>
<span class="t" style="left:572px;top:247.5px;font-size:17px;line-height:21px;color:#30e830;">59</span>
<svg style="left:603px;top:250px" width="10" height="10" viewBox="0 0 10 10"><circle cx="5.2" cy="5" r="4" fill="#30e830"/></svg>
<div class="k" style="left:634px;top:251px;width:18.5px;height:16px;"></div>
<span class="t b" style="left:638px;top:250.5px;font-size:13px;line-height:17px;color:#40e0e0;">3</span>
<div class="r" style="left:654px;top:249px;width:16px;height:10px;"></div>
<svg style="left:654px;top:249px" width="16" height="10"><path d="M4.0 7.0l3.5-4 3.5 4z" fill="#000"/></svg>
<div class="r" style="left:654px;top:259px;width:16px;height:10px;"></div>
<svg style="left:654px;top:259px" width="16" height="10"><path d="M4.0 3.0l3.5 4 3.5-4z" fill="#000"/></svg>
<span class="t" style="left:570.5px;top:267.5px;font-size:11px;line-height:15px;color:#000;letter-spacing:0.31px;">Уставка</span>
<div class="k" style="left:571px;top:280px;width:43px;height:19.5px;"></div>
<span class="t" style="left:572px;top:279.2px;font-size:17px;line-height:21px;color:#30e830;">61</span>
<div class="r" style="left:616px;top:280px;width:15px;height:10px;"></div>
<svg style="left:616px;top:280px" width="15" height="10"><path d="M3.5 7.0l3.5-4 3.5 4z" fill="#000"/></svg>
<div class="r" style="left:616px;top:290px;width:15px;height:10px;"></div>
<svg style="left:616px;top:290px" width="15" height="10"><path d="M3.5 3.0l3.5 4 3.5-4z" fill="#000"/></svg>
<div class="h" style="left:634px;top:280.5px;width:17px;height:17.5px;box-shadow:inset 1px 1px #404040,inset -1px -1px #fff,inset 2px 2px #808080;"></div>
<div class="" style="left:568px;top:301px;width:104px;height:33px;box-shadow:inset 1px 1px #808080,inset -1px -1px #fff;"></div>
<span class="t" style="left:569.5px;top:301.5px;font-size:11px;line-height:15px;color:#000;letter-spacing:0.21px;">Коррект.уставки</span>
<div class="r" style="left:571px;top:316px;width:19px;height:16px;"></div>
<span class="t b" style="left:577px;top:316.5px;font-size:12px;line-height:16px;color:#000;">&lt;</span>
<div class="h" style="left:590px;top:316px;width:22px;height:16px;box-shadow:inset 1px 1px #404040,inset -1px -1px #fff,inset 2px 2px #808080;"></div>
<span class="t b" style="left:598.5px;top:318.0px;font-size:11px;line-height:15px;color:#000;">=</span>
<div class="r" style="left:612px;top:316px;width:18.5px;height:16px;"></div>
<span class="t b" style="left:618px;top:316.5px;font-size:12px;line-height:16px;color:#000;">&gt;</span>
<div class="k" style="left:633px;top:316px;width:20px;height:17px;"></div>
<span class="t b" style="left:635.5px;top:316.5px;font-size:13px;line-height:17px;color:#30e830;">0</span>
<div class="r" style="left:654px;top:314px;width:15px;height:10px;"></div>
<svg style="left:654px;top:314px" width="15" height="10"><path d="M3.5 7.0l3.5-4 3.5 4z" fill="#000"/></svg>
<div class="r" style="left:654px;top:324px;width:15px;height:10px;"></div>
<svg style="left:654px;top:324px" width="15" height="10"><path d="M3.5 3.0l3.5 4 3.5-4z" fill="#000"/></svg>
<div class="" style="left:568px;top:335.5px;width:51px;height:16.5px;box-shadow:inset 1px 1px #808080,inset -1px -1px #fff;"></div>
<div class="" style="left:621px;top:335.5px;width:51px;height:16.5px;box-shadow:inset 1px 1px #808080,inset -1px -1px #fff;"></div>
<span class="t" style="left:572px;top:337.5px;font-size:11px;line-height:15px;color:#000;letter-spacing:0.26px;">ДТ:</span>
<div class="" style="left:592.5px;top:338px;width:19px;height:12px;background:#fff;"></div>
<span class="t" style="left:632px;top:337.5px;font-size:11px;line-height:15px;color:#000;letter-spacing:-0.50px;">Н:</span>
<div class="" style="left:649px;top:338px;width:19px;height:12px;background:#fff;"></div>
<div class="" style="left:678px;top:216px;width:110px;height:138px;background:#c0c0c0;box-shadow:inset 1px 1px #fff,inset 2px 2px #fff,inset -1px -1px #808080,inset -2px -2px #909090;"></div>
<div class="" style="left:682px;top:219px;width:53px;height:17px;background:#40e8f0;box-shadow:inset 1px 1px #fff,inset -1px -1px #fff;"></div>
<svg style="left:684px;top:222.5px" width="12" height="12" viewBox="0 0 12 12"><circle cx="6" cy="6" r="4.7" fill="#004000"/><circle cx="5.8" cy="5.8" r="3.9" fill="#008800"/><circle cx="4.4" cy="4.4" r="1.1" fill="#d0ffd0"/></svg>
<span class="t b" style="left:700.5px;top:220.0px;font-size:12px;line-height:16px;color:#000;letter-spacing:0.09px;">И4</span>
<div class="r" style="left:720px;top:221px;width:14px;height:14px;"></div>
<span class="t b" style="left:740px;top:220.0px;font-size:12px;line-height:16px;color:#000;letter-spacing:0.40px;">БУКСА</span>
<span class="t" style="left:682px;top:235.5px;font-size:11px;line-height:15px;color:#000;letter-spacing:0.03px;">Температ.</span>
<span class="t" style="left:750px;top:235.5px;font-size:11px;line-height:15px;color:#000;letter-spacing:0.07px;">Ось</span>
<div class="k" style="left:684px;top:248.5px;width:44px;height:19.5px;"></div>
<span class="t" style="left:685px;top:247.5px;font-size:17px;line-height:21px;color:#ffff40;">-70</span>
<div class="k" style="left:747px;top:251px;width:18.5px;height:16px;"></div>
<span class="t b" style="left:751px;top:250.5px;font-size:13px;line-height:17px;color:#40e0e0;">4</span>
<div class="r" style="left:767px;top:249px;width:16px;height:10px;"></div>
<svg style="left:767px;top:249px" width="16" height="10"><path d="M4.0 7.0l3.5-4 3.5 4z" fill="#000"/></svg>
<div class="r" style="left:767px;top:259px;width:16px;height:10px;"></div>
<svg style="left:767px;top:259px" width="16" height="10"><path d="M4.0 3.0l3.5 4 3.5-4z" fill="#000"/></svg>
<span class="t" style="left:683.5px;top:267.5px;font-size:11px;line-height:15px;color:#000;letter-spacing:0.31px;">Уставка</span>
<div class="k" style="left:684px;top:280px;width:43px;height:19.5px;"></div>
<span class="t" style="left:685px;top:279.2px;font-size:17px;line-height:21px;color:#30e830;">0</span>
<div class="r" style="left:729px;top:280px;width:15px;height:10px;"></div>
<svg style="left:729px;top:280px" width="15" height="10"><path d="M3.5 7.0l3.5-4 3.5 4z" fill="#000"/></svg>
<div class="r" style="left:729px;top:290px;width:15px;height:10px;"></div>
<svg style="left:729px;top:290px" width="15" height="10"><path d="M3.5 3.0l3.5 4 3.5-4z" fill="#000"/></svg>
<div class="r" style="left:747px;top:280.5px;width:17px;height:17.5px;"></div>
<div class="" style="left:681px;top:301px;width:104px;height:33px;box-shadow:inset 1px 1px #808080,inset -1px -1px #fff;"></div>
<span class="t" style="left:682.5px;top:301.5px;font-size:11px;line-height:15px;color:#000;letter-spacing:0.21px;">Коррект.уставки</span>
<div class="r" style="left:684px;top:316px;width:19px;height:16px;"></div>
<span class="t b" style="left:690px;top:316.5px;font-size:12px;line-height:16px;color:#000;">&lt;</span>
<div class="h" style="left:703px;top:316px;width:22px;height:16px;box-shadow:inset 1px 1px #404040,inset -1px -1px #fff,inset 2px 2px #808080;"></div>
<span class="t b" style="left:711.5px;top:318.0px;font-size:11px;line-height:15px;color:#000;">=</span>
<div class="r" style="left:725px;top:316px;width:18.5px;height:16px;"></div>
<span class="t b" style="left:731px;top:316.5px;font-size:12px;line-height:16px;color:#000;">&gt;</span>
<div class="k" style="left:746px;top:316px;width:20px;height:17px;"></div>
<span class="t b" style="left:748.5px;top:316.5px;font-size:13px;line-height:17px;color:#30e830;">0</span>
<div class="r" style="left:767px;top:314px;width:15px;height:10px;"></div>
<svg style="left:767px;top:314px" width="15" height="10"><path d="M3.5 7.0l3.5-4 3.5 4z" fill="#000"/></svg>
<div class="r" style="left:767px;top:324px;width:15px;height:10px;"></div>
<svg style="left:767px;top:324px" width="15" height="10"><path d="M3.5 3.0l3.5 4 3.5-4z" fill="#000"/></svg>
<div class="" style="left:681px;top:335.5px;width:51px;height:16.5px;box-shadow:inset 1px 1px #808080,inset -1px -1px #fff;"></div>
<div class="" style="left:734px;top:335.5px;width:51px;height:16.5px;box-shadow:inset 1px 1px #808080,inset -1px -1px #fff;"></div>
<span class="t" style="left:685px;top:337.5px;font-size:11px;line-height:15px;color:#000;letter-spacing:0.26px;">ДТ:</span>
<div class="" style="left:705.5px;top:338px;width:19px;height:12px;background:#fff;"></div>
<span class="t" style="left:745px;top:337.5px;font-size:11px;line-height:15px;color:#000;letter-spacing:-0.50px;">Н:</span>
<div class="" style="left:762px;top:338px;width:19px;height:12px;background:#fff;"></div>
<div class="" style="left:203px;top:361px;width:110px;height:138px;background:#c0c0c0;box-shadow:inset 1px 1px #fff,inset 2px 2px #fff,inset -1px -1px #808080,inset -2px -2px #909090;"></div>
<div class="" style="left:207px;top:364px;width:53px;height:17px;background:#40e8f0;box-shadow:inset 1px 1px #fff,inset -1px -1px #fff;"></div>
<svg style="left:209px;top:367.5px" width="12" height="12" viewBox="0 0 12 12"><circle cx="6" cy="6" r="4.7" fill="#20a020"/><circle cx="6" cy="6" r="3.9" fill="#30e830"/><circle cx="4.6" cy="4.4" r="1.1" fill="#a0ffa0"/></svg>
<span class="t b" style="left:225.5px;top:365.0px;font-size:12px;line-height:16px;color:#000;letter-spacing:0.09px;">И5</span>
<div class="h" style="left:245px;top:366px;width:14px;height:14px;box-shadow:inset 1px 1px #404040,inset -1px -1px #fff,inset 2px 2px #808080;"></div>
<span class="t b" style="left:265px;top:365.0px;font-size:12px;line-height:16px;color:#000;letter-spacing:-0.01px;">ПОДСТ</span>
<span class="t" style="left:207px;top:380.5px;font-size:11px;line-height:15px;color:#000;letter-spacing:0.03px;">Температ.</span>
<span class="t" style="left:275px;top:380.5px;font-size:11px;line-height:15px;color:#000;letter-spacing:0.07px;">Ось</span>
<div class="k" style="left:209px;top:393.5px;width:44px;height:19.5px;"></div>
<span class="t" style="left:210px;top:392.5px;font-size:17px;line-height:21px;color:#30e830;">62</span>
<svg style="left:241px;top:395px" width="10" height="10" viewBox="0 0 10 10"><circle cx="5.2" cy="5" r="4" fill="#30e830"/></svg>
<div class="k" style="left:272px;top:396px;width:18.5px;height:16px;"></div>
<span class="t b" style="left:276px;top:395.5px;font-size:13px;line-height:17px;color:#40e0e0;">1</span>
<div class="r" style="left:292px;top:394px;width:16px;height:10px;"></div>
<svg style="left:292px;top:394px" width="16" height="10"><path d="M4.0 7.0l3.5-4 3.5 4z" fill="#000"/></svg>
<div class="r" style="left:292px;top:404px;width:16px;height:10px;"></div>
<svg style="left:292px;top:404px" width="16" height="10"><path d="M4.0 3.0l3.5 4 3.5-4z" fill="#000"/></svg>
<span class="t" style="left:208.5px;top:412.5px;font-size:11px;line-height:15px;color:#000;letter-spacing:0.31px;">Уставка</span>
<div class="k" style="left:209px;top:425px;width:43px;height:19.5px;"></div>
<span class="t" style="left:210px;top:424.2px;font-size:17px;line-height:21px;color:#30e830;">62</span>
<div class="r" style="left:254px;top:425px;width:15px;height:10px;"></div>
<svg style="left:254px;top:425px" width="15" height="10"><path d="M3.5 7.0l3.5-4 3.5 4z" fill="#000"/></svg>
<div class="r" style="left:254px;top:435px;width:15px;height:10px;"></div>
<svg style="left:254px;top:435px" width="15" height="10"><path d="M3.5 3.0l3.5 4 3.5-4z" fill="#000"/></svg>
<div class="h" style="left:272px;top:425.5px;width:17px;height:17.5px;box-shadow:inset 1px 1px #404040,inset -1px -1px #fff,inset 2px 2px #808080;"></div>
<div class="" style="left:206px;top:446px;width:104px;height:33px;box-shadow:inset 1px 1px #808080,inset -1px -1px #fff;"></div>
<span class="t" style="left:207.5px;top:446.5px;font-size:11px;line-height:15px;color:#000;letter-spacing:0.21px;">Коррект.уставки</span>
<div class="r" style="left:209px;top:461px;width:19px;height:16px;"></div>
<span class="t b" style="left:215px;top:461.5px;font-size:12px;line-height:16px;color:#000;">&lt;</span>
<div class="h" style="left:228px;top:461px;width:22px;height:16px;box-shadow:inset 1px 1px #404040,inset -1px -1px #fff,inset 2px 2px #808080;"></div>
<span class="t b" style="left:236.5px;top:463.0px;font-size:11px;line-height:15px;color:#000;">=</span>
<div class="r" style="left:250px;top:461px;width:18.5px;height:16px;"></div>
<span class="t b" style="left:256px;top:461.5px;font-size:12px;line-height:16px;color:#000;">&gt;</span>
<div class="k" style="left:271px;top:461px;width:20px;height:17px;"></div>
<span class="t b" style="left:273.5px;top:461.5px;font-size:13px;line-height:17px;color:#30e830;">0</span>
<div class="r" style="left:292px;top:459px;width:15px;height:10px;"></div>
<svg style="left:292px;top:459px" width="15" height="10"><path d="M3.5 7.0l3.5-4 3.5 4z" fill="#000"/></svg>
<div class="r" style="left:292px;top:469px;width:15px;height:10px;"></div>
<svg style="left:292px;top:469px" width="15" height="10"><path d="M3.5 3.0l3.5 4 3.5-4z" fill="#000"/></svg>
<div class="" style="left:206px;top:480.5px;width:51px;height:16.5px;box-shadow:inset 1px 1px #808080,inset -1px -1px #fff;"></div>
<div class="" style="left:259px;top:480.5px;width:51px;height:16.5px;box-shadow:inset 1px 1px #808080,inset -1px -1px #fff;"></div>
<span class="t" style="left:210px;top:482.5px;font-size:11px;line-height:15px;color:#000;letter-spacing:0.26px;">ДТ:</span>
<div class="" style="left:230.5px;top:483px;width:19px;height:12px;background:#fff;"></div>
<span class="t" style="left:270px;top:482.5px;font-size:11px;line-height:15px;color:#000;letter-spacing:-0.50px;">Н:</span>
<div class="" style="left:287px;top:483px;width:19px;height:12px;background:#fff;"></div>
<div class="" style="left:316px;top:361px;width:110px;height:138px;background:#c0c0c0;box-shadow:inset 1px 1px #fff,inset 2px 2px #fff,inset -1px -1px #808080,inset -2px -2px #909090;"></div>
<div class="" style="left:320px;top:364px;width:53px;height:17px;background:#40e8f0;box-shadow:inset 1px 1px #fff,inset -1px -1px #fff;"></div>
<svg style="left:322px;top:367.5px" width="12" height="12" viewBox="0 0 12 12"><circle cx="6" cy="6" r="4.7" fill="#004000"/><circle cx="5.8" cy="5.8" r="3.9" fill="#008800"/><circle cx="4.4" cy="4.4" r="1.1" fill="#d0ffd0"/></svg>
<span class="t b" style="left:338.5px;top:365.0px;font-size:12px;line-height:16px;color:#000;letter-spacing:0.09px;">И6</span>
<div class="r" style="left:358px;top:366px;width:14px;height:14px;"></div>
<span class="t b" style="left:378px;top:365.0px;font-size:12px;line-height:16px;color:#000;letter-spacing:0.40px;">БУКСА</span>
<span class="t" style="left:320px;top:380.5px;font-size:11px;line-height:15px;color:#000;letter-spacing:0.03px;">Температ.</span>
<span class="t" style="left:388px;top:380.5px;font-size:11px;line-height:15px;color:#000;letter-spacing:0.07px;">Ось</span>
<div class="k" style="left:322px;top:393.5px;width:44px;height:19.5px;"></div>
<span class="t" style="left:323px;top:392.5px;font-size:17px;line-height:21px;color:#ffff40;">-70</span>
<div class="k" style="left:385px;top:396px;width:18.5px;height:16px;"></div>
<span class="t b" style="left:389px;top:395.5px;font-size:13px;line-height:17px;color:#40e0e0;">2</span>
<div class="r" style="left:405px;top:394px;width:16px;height:10px;"></div>
<svg style="left:405px;top:394px" width="16" height="10"><path d="M4.0 7.0l3.5-4 3.5 4z" fill="#000"/></svg>
<div class="r" style="left:405px;top:404px;width:16px;height:10px;"></div>
<svg style="left:405px;top:404px" width="16" height="10"><path d="M4.0 3.0l3.5 4 3.5-4z" fill="#000"/></svg>
<span class="t" style="left:321.5px;top:412.5px;font-size:11px;line-height:15px;color:#000;letter-spacing:0.31px;">Уставка</span>
<div class="k" style="left:322px;top:425px;width:43px;height:19.5px;"></div>
<span class="t" style="left:323px;top:424.2px;font-size:17px;line-height:21px;color:#30e830;">0</span>
<div class="r" style="left:367px;top:425px;width:15px;height:10px;"></div>
<svg style="left:367px;top:425px" width="15" height="10"><path d="M3.5 7.0l3.5-4 3.5 4z" fill="#000"/></svg>
<div class="r" style="left:367px;top:435px;width:15px;height:10px;"></div>
<svg style="left:367px;top:435px" width="15" height="10"><path d="M3.5 3.0l3.5 4 3.5-4z" fill="#000"/></svg>
<div class="r" style="left:385px;top:425.5px;width:17px;height:17.5px;"></div>
<div class="" style="left:319px;top:446px;width:104px;height:33px;box-shadow:inset 1px 1px #808080,inset -1px -1px #fff;"></div>
<span class="t" style="left:320.5px;top:446.5px;font-size:11px;line-height:15px;color:#000;letter-spacing:0.21px;">Коррект.уставки</span>
<div class="r" style="left:322px;top:461px;width:19px;height:16px;"></div>
<span class="t b" style="left:328px;top:461.5px;font-size:12px;line-height:16px;color:#000;">&lt;</span>
<div class="h" style="left:341px;top:461px;width:22px;height:16px;box-shadow:inset 1px 1px #404040,inset -1px -1px #fff,inset 2px 2px #808080;"></div>
<span class="t b" style="left:349.5px;top:463.0px;font-size:11px;line-height:15px;color:#000;">=</span>
<div class="r" style="left:363px;top:461px;width:18.5px;height:16px;"></div>
<span class="t b" style="left:369px;top:461.5px;font-size:12px;line-height:16px;color:#000;">&gt;</span>
<div class="k" style="left:384px;top:461px;width:20px;height:17px;"></div>
<span class="t b" style="left:386.5px;top:461.5px;font-size:13px;line-height:17px;color:#30e830;">0</span>
<div class="r" style="left:405px;top:459px;width:15px;height:10px;"></div>
<svg style="left:405px;top:459px" width="15" height="10"><path d="M3.5 7.0l3.5-4 3.5 4z" fill="#000"/></svg>
<div class="r" style="left:405px;top:469px;width:15px;height:10px;"></div>
<svg style="left:405px;top:469px" width="15" height="10"><path d="M3.5 3.0l3.5 4 3.5-4z" fill="#000"/></svg>
<div class="" style="left:319px;top:480.5px;width:51px;height:16.5px;box-shadow:inset 1px 1px #808080,inset -1px -1px #fff;"></div>
<div class="" style="left:372px;top:480.5px;width:51px;height:16.5px;box-shadow:inset 1px 1px #808080,inset -1px -1px #fff;"></div>
<span class="t" style="left:323px;top:482.5px;font-size:11px;line-height:15px;color:#000;letter-spacing:0.26px;">ДТ:</span>
<div class="" style="left:343.5px;top:483px;width:19px;height:12px;background:#fff;"></div>
<span class="t" style="left:383px;top:482.5px;font-size:11px;line-height:15px;color:#000;letter-spacing:-0.50px;">Н:</span>
<div class="" style="left:400px;top:483px;width:19px;height:12px;background:#fff;"></div>
<div class="" style="left:565px;top:361px;width:110px;height:138px;background:#c0c0c0;box-shadow:inset 1px 1px #fff,inset 2px 2px #fff,inset -1px -1px #808080,inset -2px -2px #909090;"></div>
<div class="" style="left:569px;top:364px;width:53px;height:17px;background:#40e8f0;box-shadow:inset 1px 1px #fff,inset -1px -1px #fff;"></div>
<svg style="left:571px;top:367.5px" width="12" height="12" viewBox="0 0 12 12"><circle cx="6.3" cy="6.5" r="4.6" fill="#202000"/><circle cx="5.8" cy="5.8" r="4.4" fill="#ffee20"/><circle cx="4.6" cy="4.4" r="1.5" fill="#ffff90"/></svg>
<span class="t b" style="left:587.5px;top:365.0px;font-size:12px;line-height:16px;color:#000;letter-spacing:0.09px;">И7</span>
<div class="h" style="left:607px;top:366px;width:14px;height:14px;box-shadow:inset 1px 1px #404040,inset -1px -1px #fff,inset 2px 2px #808080;"></div>
<span class="t b" style="left:627px;top:365.0px;font-size:12px;line-height:16px;color:#000;letter-spacing:-0.01px;">ПОДСТ</span>
<span class="t" style="left:569px;top:380.5px;font-size:11px;line-height:15px;color:#000;letter-spacing:0.03px;">Температ.</span>
<span class="t" style="left:637px;top:380.5px;font-size:11px;line-height:15px;color:#000;letter-spacing:0.07px;">Ось</span>
<div class="k" style="left:571px;top:393.5px;width:44px;height:19.5px;"></div>
<span class="t" style="left:572px;top:392.5px;font-size:17px;line-height:21px;color:#30e830;">60</span>
<svg style="left:603px;top:395px" width="10" height="10" viewBox="0 0 10 10"><circle cx="5.2" cy="5" r="4" fill="#30e830"/></svg>
<div class="k" style="left:634px;top:396px;width:18.5px;height:16px;"></div>
<span class="t b" style="left:638px;top:395.5px;font-size:13px;line-height:17px;color:#40e0e0;">3</span>
<div class="r" style="left:654px;top:394px;width:16px;height:10px;"></div>
<svg style="left:654px;top:394px" width="16" height="10"><path d="M4.0 7.0l3.5-4 3.5 4z" fill="#000"/></svg>
<div class="r" style="left:654px;top:404px;width:16px;height:10px;"></div>
<svg style="left:654px;top:404px" width="16" height="10"><path d="M4.0 3.0l3.5 4 3.5-4z" fill="#000"/></svg>
<span class="t" style="left:570.5px;top:412.5px;font-size:11px;line-height:15px;color:#000;letter-spacing:0.31px;">Уставка</span>
<div class="k" style="left:571px;top:425px;width:43px;height:19.5px;"></div>
<span class="t" style="left:572px;top:424.2px;font-size:17px;line-height:21px;color:#30e830;">62</span>
<div class="r" style="left:616px;top:425px;width:15px;height:10px;"></div>
<svg style="left:616px;top:425px" width="15" height="10"><path d="M3.5 7.0l3.5-4 3.5 4z" fill="#000"/></svg>
<div class="r" style="left:616px;top:435px;width:15px;height:10px;"></div>
<svg style="left:616px;top:435px" width="15" height="10"><path d="M3.5 3.0l3.5 4 3.5-4z" fill="#000"/></svg>
<div class="h" style="left:634px;top:425.5px;width:17px;height:17.5px;box-shadow:inset 1px 1px #404040,inset -1px -1px #fff,inset 2px 2px #808080;"></div>
<div class="" style="left:568px;top:446px;width:104px;height:33px;box-shadow:inset 1px 1px #808080,inset -1px -1px #fff;"></div>
<span class="t" style="left:569.5px;top:446.5px;font-size:11px;line-height:15px;color:#000;letter-spacing:0.21px;">Коррект.уставки</span>
<div class="r" style="left:571px;top:461px;width:19px;height:16px;"></div>
<span class="t b" style="left:577px;top:461.5px;font-size:12px;line-height:16px;color:#000;">&lt;</span>
<div class="h" style="left:590px;top:461px;width:22px;height:16px;box-shadow:inset 1px 1px #404040,inset -1px -1px #fff,inset 2px 2px #808080;"></div>
<span class="t b" style="left:598.5px;top:463.0px;font-size:11px;line-height:15px;color:#000;">=</span>
<div class="r" style="left:612px;top:461px;width:18.5px;height:16px;"></div>
<span class="t b" style="left:618px;top:461.5px;font-size:12px;line-height:16px;color:#000;">&gt;</span>
<div class="k" style="left:633px;top:461px;width:20px;height:17px;"></div>
<span class="t b" style="left:635.5px;top:461.5px;font-size:13px;line-height:17px;color:#30e830;">0</span>
<div class="r" style="left:654px;top:459px;width:15px;height:10px;"></div>
<svg style="left:654px;top:459px" width="15" height="10"><path d="M3.5 7.0l3.5-4 3.5 4z" fill="#000"/></svg>
<div class="r" style="left:654px;top:469px;width:15px;height:10px;"></div>
<svg style="left:654px;top:469px" width="15" height="10"><path d="M3.5 3.0l3.5 4 3.5-4z" fill="#000"/></svg>
<div class="" style="left:568px;top:480.5px;width:51px;height:16.5px;box-shadow:inset 1px 1px #808080,inset -1px -1px #fff;"></div>
<div class="" style="left:621px;top:480.5px;width:51px;height:16.5px;box-shadow:inset 1px 1px #808080,inset -1px -1px #fff;"></div>
<span class="t" style="left:572px;top:482.5px;font-size:11px;line-height:15px;color:#000;letter-spacing:0.26px;">ДТ:</span>
<div class="" style="left:592.5px;top:483px;width:19px;height:12px;background:#fff;"></div>
<span class="t" style="left:632px;top:482.5px;font-size:11px;line-height:15px;color:#000;letter-spacing:-0.50px;">Н:</span>
<div class="" style="left:649px;top:483px;width:19px;height:12px;background:#fff;"></div>
<div class="" style="left:678px;top:361px;width:110px;height:138px;background:#c0c0c0;box-shadow:inset 1px 1px #fff,inset 2px 2px #fff,inset -1px -1px #808080,inset -2px -2px #909090;"></div>
<div class="" style="left:682px;top:364px;width:53px;height:17px;background:#40e8f0;box-shadow:inset 1px 1px #fff,inset -1px -1px #fff;"></div>
<svg style="left:684px;top:367.5px" width="12" height="12" viewBox="0 0 12 12"><circle cx="6" cy="6" r="4.7" fill="#004000"/><circle cx="5.8" cy="5.8" r="3.9" fill="#008800"/><circle cx="4.4" cy="4.4" r="1.1" fill="#d0ffd0"/></svg>
<span class="t b" style="left:700.5px;top:365.0px;font-size:12px;line-height:16px;color:#000;letter-spacing:0.09px;">И8</span>
<div class="r" style="left:720px;top:366px;width:14px;height:14px;"></div>
<span class="t b" style="left:740px;top:365.0px;font-size:12px;line-height:16px;color:#000;letter-spacing:0.40px;">БУКСА</span>
<span class="t" style="left:682px;top:380.5px;font-size:11px;line-height:15px;color:#000;letter-spacing:0.03px;">Температ.</span>
<span class="t" style="left:750px;top:380.5px;font-size:11px;line-height:15px;color:#000;letter-spacing:0.07px;">Ось</span>
<div class="k" style="left:684px;top:393.5px;width:44px;height:19.5px;"></div>
<span class="t" style="left:685px;top:392.5px;font-size:17px;line-height:21px;color:#ffff40;">-70</span>
<div class="k" style="left:747px;top:396px;width:18.5px;height:16px;"></div>
<span class="t b" style="left:751px;top:395.5px;font-size:13px;line-height:17px;color:#40e0e0;">4</span>
<div class="r" style="left:767px;top:394px;width:16px;height:10px;"></div>
<svg style="left:767px;top:394px" width="16" height="10"><path d="M4.0 7.0l3.5-4 3.5 4z" fill="#000"/></svg>
<div class="r" style="left:767px;top:404px;width:16px;height:10px;"></div>
<svg style="left:767px;top:404px" width="16" height="10"><path d="M4.0 3.0l3.5 4 3.5-4z" fill="#000"/></svg>
<span class="t" style="left:683.5px;top:412.5px;font-size:11px;line-height:15px;color:#000;letter-spacing:0.31px;">Уставка</span>
<div class="k" style="left:684px;top:425px;width:43px;height:19.5px;"></div>
<span class="t" style="left:685px;top:424.2px;font-size:17px;line-height:21px;color:#30e830;">0</span>
<div class="r" style="left:729px;top:425px;width:15px;height:10px;"></div>
<svg style="left:729px;top:425px" width="15" height="10"><path d="M3.5 7.0l3.5-4 3.5 4z" fill="#000"/></svg>
<div class="r" style="left:729px;top:435px;width:15px;height:10px;"></div>
<svg style="left:729px;top:435px" width="15" height="10"><path d="M3.5 3.0l3.5 4 3.5-4z" fill="#000"/></svg>
<div class="r" style="left:747px;top:425.5px;width:17px;height:17.5px;"></div>
<div class="" style="left:681px;top:446px;width:104px;height:33px;box-shadow:inset 1px 1px #808080,inset -1px -1px #fff;"></div>
<span class="t" style="left:682.5px;top:446.5px;font-size:11px;line-height:15px;color:#000;letter-spacing:0.21px;">Коррект.уставки</span>
<div class="r" style="left:684px;top:461px;width:19px;height:16px;"></div>
<span class="t b" style="left:690px;top:461.5px;font-size:12px;line-height:16px;color:#000;">&lt;</span>
<div class="h" style="left:703px;top:461px;width:22px;height:16px;box-shadow:inset 1px 1px #404040,inset -1px -1px #fff,inset 2px 2px #808080;"></div>
<span class="t b" style="left:711.5px;top:463.0px;font-size:11px;line-height:15px;color:#000;">=</span>
<div class="r" style="left:725px;top:461px;width:18.5px;height:16px;"></div>
<span class="t b" style="left:731px;top:461.5px;font-size:12px;line-height:16px;color:#000;">&gt;</span>
<div class="k" style="left:746px;top:461px;width:20px;height:17px;"></div>
<span class="t b" style="left:748.5px;top:461.5px;font-size:13px;line-height:17px;color:#30e830;">0</span>
<div class="r" style="left:767px;top:459px;width:15px;height:10px;"></div>
<svg style="left:767px;top:459px" width="15" height="10"><path d="M3.5 7.0l3.5-4 3.5 4z" fill="#000"/></svg>
<div class="r" style="left:767px;top:469px;width:15px;height:10px;"></div>
<svg style="left:767px;top:469px" width="15" height="10"><path d="M3.5 3.0l3.5 4 3.5-4z" fill="#000"/></svg>
<div class="" style="left:681px;top:480.5px;width:51px;height:16.5px;box-shadow:inset 1px 1px #808080,inset -1px -1px #fff;"></div>
<div class="" style="left:734px;top:480.5px;width:51px;height:16.5px;box-shadow:inset 1px 1px #808080,inset -1px -1px #fff;"></div>
<span class="t" style="left:685px;top:482.5px;font-size:11px;line-height:15px;color:#000;letter-spacing:0.26px;">ДТ:</span>
<div class="" style="left:705.5px;top:483px;width:19px;height:12px;background:#fff;"></div>
<span class="t" style="left:745px;top:482.5px;font-size:11px;line-height:15px;color:#000;letter-spacing:-0.50px;">Н:</span>
<div class="" style="left:762px;top:483px;width:19px;height:12px;background:#fff;"></div>
<div class="" style="left:429px;top:217px;width:132px;height:17px;background:#e0ded8;box-shadow:inset 1px 1px #808080,inset -1px -1px #fff,inset 2px 2px #a0a0a0;"></div>
<span class="t b" style="left:435.7px;top:216.5px;font-size:14px;line-height:18px;color:#000;letter-spacing:0.57px;">Правая сторона</span>
<div class="g" style="left:428px;top:240px;width:134px;height:54px;"></div>
<div class="" style="left:438px;top:234px;width:114px;height:13px;background:#c0c0c0;"></div>
<span class="t" style="left:440px;top:234.0px;font-size:11px;line-height:15px;color:#000;letter-spacing:0.00px;">Температура нагрева</span>
<span class="t" style="left:445.7px;top:250.5px;font-size:11px;line-height:15px;color:#000;letter-spacing:-0.01px;">БУКСЫ :</span>
<span class="t" style="left:445.7px;top:274.5px;font-size:11px;line-height:15px;color:#000;letter-spacing:0.13px;">ПОДСТ. :</span>
<div class="k" style="left:498px;top:249px;width:43px;height:19px;"></div>
<span class="t" style="left:508.5px;top:247.5px;font-size:17px;line-height:21px;color:#30e830;">61</span>
<div class="k" style="left:498px;top:272px;width:43px;height:19px;"></div>
<span class="t" style="left:508.5px;top:270.5px;font-size:17px;line-height:21px;color:#30e830;">61</span>
<div class="" style="left:443px;top:297px;width:105px;height:56px;background:#c0c0c0;box-shadow:inset 1px 1px #fff,inset 2px 2px #fff,inset -1px -1px #808080,inset -2px -2px #909090;"></div>
<div class="" style="left:447px;top:301px;width:52px;height:18px;background:#40e8f0;box-shadow:inset 1px 1px #fff,inset -1px -1px #fff;"></div>
<span class="t b" style="left:449.5px;top:302.0px;font-size:12px;line-height:16px;color:#000;letter-spacing:0.28px;">ДТК1</span>
<div class="h" style="left:484.5px;top:303px;width:13px;height:13px;box-shadow:inset 1px 1px #404040,inset -1px -1px #fff,inset 2px 2px #808080;"></div>
<span class="t" style="left:447.3px;top:317.5px;font-size:11px;line-height:15px;color:#000;letter-spacing:-0.03px;">Температ.</span>
<div class="k" style="left:449.5px;top:331px;width:43.5px;height:19px;"></div>
<span class="t" style="left:461.5px;top:329.8px;font-size:17px;line-height:21px;color:#ffff40;">22</span>
<div class="" style="left:497.5px;top:332px;width:46px;height:16px;box-shadow:inset 1px 1px #808080,inset -1px -1px #fff;"></div>
<span class="t" style="left:501px;top:334.0px;font-size:11px;line-height:15px;color:#000;letter-spacing:0.09px;">ДТ:</span>
<div class="" style="left:522px;top:335px;width:20px;height:12.5px;background:#fff;"></div>
<div class="" style="left:443px;top:361px;width:105px;height:56px;background:#c0c0c0;box-shadow:inset 1px 1px #fff,inset 2px 2px #fff,inset -1px -1px #808080,inset -2px -2px #909090;"></div>
<div class="" style="left:447px;top:365px;width:52px;height:18px;background:#40e8f0;box-shadow:inset 1px 1px #fff,inset -1px -1px #fff;"></div>
<span class="t b" style="left:449.5px;top:366.0px;font-size:12px;line-height:16px;color:#000;letter-spacing:0.28px;">ДТК2</span>
<div class="h" style="left:484.5px;top:367px;width:13px;height:13px;box-shadow:inset 1px 1px #404040,inset -1px -1px #fff,inset 2px 2px #808080;"></div>
<span class="t" style="left:447.3px;top:381.5px;font-size:11px;line-height:15px;color:#000;letter-spacing:-0.03px;">Температ.</span>
<div class="k" style="left:449.5px;top:395px;width:43.5px;height:19px;"></div>
<span class="t" style="left:461.5px;top:393.8px;font-size:17px;line-height:21px;color:#ffff40;">23</span>
<div class="" style="left:497.5px;top:396px;width:46px;height:16px;box-shadow:inset 1px 1px #808080,inset -1px -1px #fff;"></div>
<span class="t" style="left:501px;top:398.0px;font-size:11px;line-height:15px;color:#000;letter-spacing:0.09px;">ДТ:</span>
<div class="" style="left:522px;top:399px;width:20px;height:12.5px;background:#fff;"></div>
<div class="g" style="left:428px;top:423px;width:134px;height:54px;"></div>
<div class="" style="left:438px;top:417px;width:114px;height:13px;background:#c0c0c0;"></div>
<span class="t" style="left:440px;top:417.0px;font-size:11px;line-height:15px;color:#000;letter-spacing:0.00px;">Температура нагрева</span>
<span class="t" style="left:445.7px;top:433.5px;font-size:11px;line-height:15px;color:#000;letter-spacing:-0.01px;">БУКСЫ :</span>
<span class="t" style="left:445.7px;top:457.5px;font-size:11px;line-height:15px;color:#000;letter-spacing:0.13px;">ПОДСТ. :</span>
<div class="k" style="left:498px;top:432px;width:43px;height:19px;"></div>
<span class="t" style="left:508.5px;top:430.5px;font-size:17px;line-height:21px;color:#30e830;">62</span>
<div class="k" style="left:498px;top:455px;width:43px;height:19px;"></div>
<span class="t" style="left:508.5px;top:453.5px;font-size:17px;line-height:21px;color:#30e830;">62</span>
<div class="" style="left:429px;top:480.5px;width:132px;height:17px;background:#e0ded8;box-shadow:inset 1px 1px #808080,inset -1px -1px #fff,inset 2px 2px #a0a0a0;"></div>
<span class="t b" style="left:441px;top:480.0px;font-size:14px;line-height:18px;color:#000;letter-spacing:0.48px;">Левая сторона</span>
</div></body></html>
